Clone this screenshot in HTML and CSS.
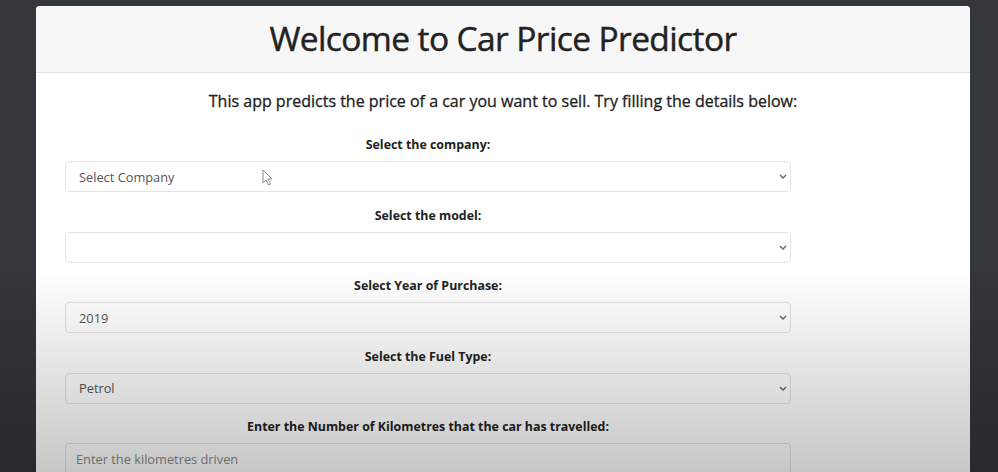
FILE: index.html
```html
<!DOCTYPE html>
<html lang="en">
<head>
<meta charset="utf-8">
<title>Car Price Predictor</title>
<link rel="stylesheet" href="styles.css">
</head>
<body>
<div class="page">
  <div class="card">
    <div class="card-header">
      <h1 class="title">Welcome to Car Price Predictor</h1>
    </div>
    <div class="card-body">
      <h5 class="subtitle">This app predicts the price of a car you want to sell. Try filling the details below:</h5>
      <form class="form">
        <div class="field">
          <label class="label">Select the company:</label>
          <div class="select-wrap">
            <select class="control"><option>Select Company</option></select>
            <svg class="chevron" width="8" height="5" viewBox="0 0 8 5"><path d="M1 1l3 3 3-3" fill="none" stroke="#666" stroke-width="1.4"/></svg>
            <svg class="cursor" width="12" height="17" viewBox="0 0 12 17"><path d="M1 1v13l3-3 2.5 5 2-1-2.5-5H10z" fill="#fff" stroke="#8a8a8a" stroke-width="1" stroke-linejoin="round"/></svg>
          </div>
        </div>
        <div class="field">
          <label class="label">Select the model:</label>
          <div class="select-wrap">
            <select class="control"><option></option></select>
            <svg class="chevron" width="8" height="5" viewBox="0 0 8 5"><path d="M1 1l3 3 3-3" fill="none" stroke="#666" stroke-width="1.4"/></svg>
          </div>
        </div>
        <div class="field">
          <label class="label">Select Year of Purchase:</label>
          <div class="select-wrap">
            <select class="control"><option>2019</option></select>
            <svg class="chevron" width="8" height="5" viewBox="0 0 8 5"><path d="M1 1l3 3 3-3" fill="none" stroke="#666" stroke-width="1.4"/></svg>
          </div>
        </div>
        <div class="field">
          <label class="label">Select the Fuel Type:</label>
          <div class="select-wrap">
            <select class="control"><option>Petrol</option></select>
            <svg class="chevron" width="8" height="5" viewBox="0 0 8 5"><path d="M1 1l3 3 3-3" fill="none" stroke="#666" stroke-width="1.4"/></svg>
          </div>
        </div>
        <div class="field">
          <label class="label">Enter the Number of Kilometres that the car has travelled:</label>
          <input class="control input" type="text" placeholder="Enter the kilometres driven">
        </div>
      </form>
    </div>
  </div>
</div>
<div class="shade"></div>
</body>
</html>
```

FILE: styles.css
```css
html, body {
  margin: 0;
  padding: 0;
  height: 100%;
  overflow: hidden;
}
body {
  background: #33363b;
  font-family: "Open Sans", "Noto Sans", sans-serif;
  color: #212529;
}
.page {
  padding: 6px 28px 0 36px;
}
.card {
  background: #fff;
  border-radius: 4px 4px 0 0;
  height: 480px;
}
.card-header {
  background: #f7f7f7;
  border-bottom: 1px solid #e2e2e2;
  border-radius: 4px 4px 0 0;
  height: 66px;
  display: flex;
  align-items: center;
  justify-content: center;
}
.title {
  margin: 0;
  font-size: 33.5px;
  font-weight: 500;
  line-height: 1;
  color: #222;
  letter-spacing: -0.6px;
  -webkit-text-stroke: 0.45px #222;
}
.card-body {
  padding-top: 16px;
}
.subtitle {
  margin: 0;
  text-align: center;
  font-size: 16px;
  font-weight: 500;
  line-height: 24px;
  color: #222;
  -webkit-text-stroke: 0.3px #222;
}
.form {
  width: 726px;
  margin: 22px 0 0 29px;
}
.field {
  display: flex;
  flex-direction: column;
  margin-bottom: 13.5px;
}
.label {
  display: block;
  text-align: center;
  font-size: 12.4px;
  font-weight: 700;
  line-height: 20px;
  margin-bottom: 6px;
  color: #222;
}
.select-wrap {
  position: relative;
}
.control {
  display: block;
  width: 100%;
  box-sizing: border-box;
  height: 31px;
  padding: 0 13px;
  font-family: inherit;
  font-size: 12.8px;
  color: #555;
  background: #fff;
  border: 1px solid #e4e4e4;
  border-radius: 4px;
  -webkit-appearance: none;
  appearance: none;
  outline: none;
}
.input {
  padding: 0 10px;
}
.input::placeholder {
  color: #8a8a8a;
}
.chevron {
  position: absolute;
  right: 4px;
  top: 13px;
}
.cursor {
  position: absolute;
  left: 197px;
  top: 8px;
}
.shade {
  position: fixed;
  inset: 0;
  pointer-events: none;
  background: linear-gradient(to bottom, rgba(0,0,0,0) 0, rgba(0,0,0,0) 270px, rgba(0,0,0,0.22) 472px);
}
```
